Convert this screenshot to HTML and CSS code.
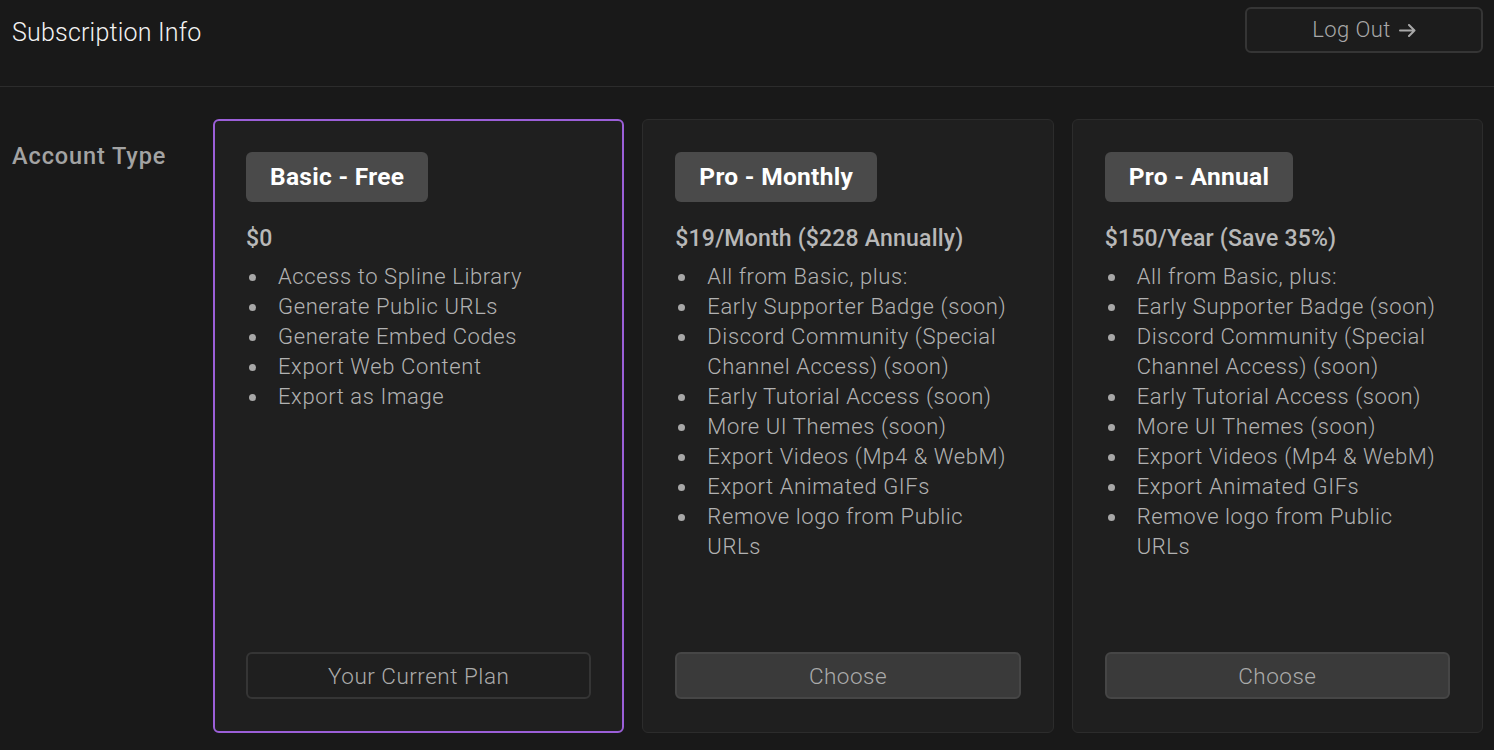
FILE: index.html
```html
<!DOCTYPE html>
<html>
<head>
<meta charset="utf-8">
<title>Subscription Info</title>
<link rel="stylesheet" href="styles.css">
</head>
<body>
<header class="top">
  <h1 class="title">Subscription Info</h1>
  <button class="logout">Log Out<svg class="arrow" width="17" height="13" viewBox="0 0 17 13"><path d="M1 6.5H15.5M10 1L15.5 6.5L10 12" fill="none" stroke="currentColor" stroke-width="2" stroke-linecap="round" stroke-linejoin="round"/></svg></button>
</header>
<main class="main">
  <div class="label">Account Type</div>
  <div class="plans">
    <section class="card card-current">
      <div class="badge">Basic - Free</div>
      <div class="price">$0</div>
      <ul class="features">
        <li>Access to Spline Library</li>
        <li>Generate Public URLs</li>
        <li>Generate Embed Codes</li>
        <li>Export Web Content</li>
        <li>Export as Image</li>
      </ul>
      <button class="btn btn-current">Your Current Plan</button>
    </section>
    <section class="card">
      <div class="badge">Pro - Monthly</div>
      <div class="price">$19/Month ($228 Annually)</div>
      <ul class="features">
        <li>All from Basic, plus:</li>
        <li>Early Supporter Badge (soon)</li>
        <li>Discord Community (Special Channel Access) (soon)</li>
        <li>Early Tutorial Access (soon)</li>
        <li>More UI Themes (soon)</li>
        <li>Export Videos (Mp4 &amp; WebM)</li>
        <li>Export Animated GIFs</li>
        <li>Remove logo from Public URLs</li>
      </ul>
      <button class="btn btn-choose">Choose</button>
    </section>
    <section class="card">
      <div class="badge">Pro - Annual</div>
      <div class="price">$150/Year (Save 35%)</div>
      <ul class="features">
        <li>All from Basic, plus:</li>
        <li>Early Supporter Badge (soon)</li>
        <li>Discord Community (Special Channel Access) (soon)</li>
        <li>Early Tutorial Access (soon)</li>
        <li>More UI Themes (soon)</li>
        <li>Export Videos (Mp4 &amp; WebM)</li>
        <li>Export Animated GIFs</li>
        <li>Remove logo from Public URLs</li>
      </ul>
      <button class="btn btn-choose">Choose</button>
    </section>
  </div>
</main>
</body>
</html>
```

FILE: styles.css
```css
* { box-sizing: border-box; }
html, body { margin: 0; padding: 0; }
body {
  background: #191919;
  font-family: Roboto, "Liberation Sans", Arial, sans-serif;
  color: #a8a8a8;
  height: 100vh;
  display: flex;
  flex-direction: column;
  overflow: hidden;
}
.top {
  height: 87px;
  border-bottom: 1px solid #2c2c2c;
  display: flex;
  align-items: flex-start;
  justify-content: space-between;
  padding: 7px 12px 0 12px;
  flex-shrink: 0;
}
.title {
  margin: 11px 0 0 0;
  font-size: 25px;
  font-weight: 300;
  color: #f2f2f2;
  line-height: 30px;
  letter-spacing: 0.2px;
}
.logout {
  width: 238px;
  height: 46px;
  background: #1c1c1c;
  border: 2px solid #353535;
  border-radius: 6px;
  color: #a8a8a8;
  font-family: inherit;
  font-size: 22px;
  font-weight: 300;
  padding: 0;
  margin-right: -1px;
  line-height: 1;
  display: flex;
  align-items: center;
  justify-content: center;
  gap: 8px;
  letter-spacing: 0.4px;
}
.arrow { display: block; margin-top: 1px; }
.main {
  flex: 1;
  display: flex;
  padding: 32px 11px 17px 12px;
  min-height: 0;
}
.label {
  width: 201px;
  flex-shrink: 0;
  font-size: 23.5px;
  font-weight: 500;
  color: #a3a3a3;
  padding-top: 22px;
  line-height: 30px;
  letter-spacing: 0.9px;
}
.plans {
  flex: 1;
  display: grid;
  grid-template-columns: 1fr 1fr 1fr;
  gap: 18px;
}
.card {
  background: #1f1f1f;
  border: 1px solid #2c2c2c;
  border-radius: 6px;
  padding: 32px 32px 33px 32px;
  display: flex;
  flex-direction: column;
}
.card-current {
  border: 2px solid #9b5fd8;
  padding: 31px 31px 32px 31px;
}
.badge {
  align-self: flex-start;
  height: 50px;
  background: #4a4a4a;
  border-radius: 6px;
  padding: 0 24px;
  font-size: 24.5px;
  font-weight: 700;
  color: #ffffff;
  line-height: 50px;
  letter-spacing: 0.3px;
}
.price {
  margin-top: 23px;
  font-size: 23px;
  font-weight: 500;
  color: #b8b8b8;
  line-height: 28px;
  letter-spacing: 0.2px;
}
.features {
  list-style: none;
  margin: 9px 0 0 0;
  padding: 0;
  flex: 1;
}
.features li {
  display: flex;
  font-size: 22px;
  font-weight: 300;
  line-height: 30px;
  color: #b2b2b2;
  letter-spacing: 0.6px;
}
.features li::before {
  content: "";
  width: 7px;
  height: 7px;
  border-radius: 50%;
  background: #a8a8a8;
  flex-shrink: 0;
  margin: 12px 22px 0 3px;
}
.btn {
  height: 47px;
  width: 100%;
  border-radius: 6px;
  font-family: inherit;
  font-size: 22.5px;
  font-weight: 300;
  color: #ababab;
  padding: 0;
  letter-spacing: 0.5px;
}
.btn-current {
  background: #1f1f1f;
  border: 2px solid #353535;
}
.btn-choose {
  background: #3a3a3a;
  border: 2px solid #464646;
}
```
